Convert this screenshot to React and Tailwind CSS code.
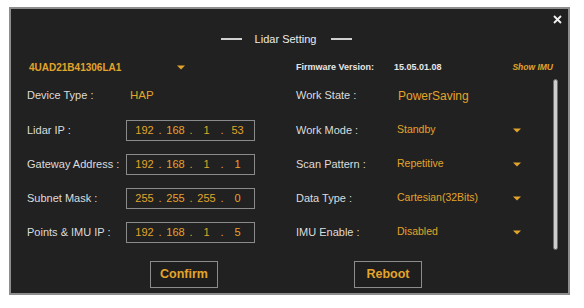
import React from 'react';

const ORANGE = 'text-[#e3a42a]';

// Small downward caret used by the dropdowns
function Caret() {
  return (
    <svg width="8" height="5" viewBox="0 0 8 5" className="shrink-0">
      <path d="M0 0.5 L8 0.5 L4 4.5 Z" fill="#e3a42a" />
    </svg>
  );
}

function IpBox({ parts }) {
  return (
    <div className="flex h-[21px] w-[129px] items-center border border-[#8a8a8a] pl-[4px]">
      {parts.map((p, i) => (
        <React.Fragment key={i}>
          <span className={`w-[27px] text-center text-[11px] ${ORANGE}`}>{p}</span>
          {i < 3 && <span className={`w-[4px] text-center text-[11px] ${ORANGE}`}>.</span>}
        </React.Fragment>
      ))}
    </div>
  );
}

const IP_ROWS = [
  ['Lidar IP :', ['192', '168', '1', '53']],
  ['Gateway Address :', ['192', '168', '1', '1']],
  ['Subnet Mask :', ['255', '255', '255', '0']],
  ['Points & IMU IP :', ['192', '168', '1', '5']],
];

const SELECTS = [
  ['Work Mode :', 'Standby'],
  ['Scan Pattern :', 'Repetitive'],
  ['Data Type :', 'Cartesian(32Bits)'],
  ['IMU Enable :', 'Disabled'],
];

export default function App() {
  return (
    <div
      className="h-[308px] w-[584px] bg-white pl-[9px] pt-[7px]"
      style={{ fontFamily: '"Liberation Sans", Arial, sans-serif' }}
    >
      <div className="relative flex h-[288px] w-[561px] flex-col border-2 border-[#8d8d8d] bg-[#212121]">
        {/* close */}
        <svg width="9" height="9" viewBox="0 0 9 9" className="absolute right-[6px] top-[6px]">
          <path d="M1 1 L8 8 M8 1 L1 8" stroke="#f2f2f2" strokeWidth="1.8" />
        </svg>

        {/* title */}
        <div className="mt-[22px] flex h-[16px] items-center justify-center pr-[6px]">
          <div className="h-[1.5px] w-[21px] bg-[#d0d0d0]" />
          <span className="ml-[13px] mr-[15px] text-[11px] text-[#ececec]">Lidar Setting</span>
          <div className="h-[1.5px] w-[21px] bg-[#d0d0d0]" />
        </div>

        <div className="mt-[10px] flex">
          {/* left column */}
          <div className="w-[286px] pl-[16px]">
            <div className="flex h-[21px] items-center">
              <div className={`w-[150px] pl-[2px] text-[10px] font-bold ${ORANGE}`}>4UAD21B41306LA1</div>
              <Caret />
            </div>
            <div className="flex h-[35px] items-center">
              <span className="w-[103px] text-[11px] text-[#dcdcdc]">Device Type :</span>
              <span className={`text-[11.5px] ${ORANGE}`}>HAP</span>
            </div>
            {IP_ROWS.map(([label, parts]) => (
              <div key={label} className="flex h-[34px] items-center">
                <span className="w-[99px] text-[11px] text-[#dcdcdc]">{label}</span>
                <IpBox parts={parts} />
              </div>
            ))}
          </div>

          {/* right column */}
          <div className="flex-1 pr-[10px]">
            <div className="flex h-[21px] items-center pr-[5px]">
              <span className="w-[98px] text-[9px] font-bold text-[#e6e6e6]">Firmware Version:</span>
              <span className="text-[9px] font-bold text-[#e6e6e6]">15.05.01.08</span>
              <span className={`ml-auto text-[8.5px] font-bold italic ${ORANGE}`}>Show IMU</span>
            </div>
            <div className="flex">
              <div className="w-[257px]">
                <div className="flex h-[35px] items-center">
                  <span className="w-[102px] text-[11px] text-[#dcdcdc]">Work State :</span>
                  <span className={`text-[12px] ${ORANGE}`}>PowerSaving</span>
                </div>
                {SELECTS.map(([label, value]) => (
                  <div key={label} className="flex h-[34px] items-center">
                    <span className="w-[101px] text-[11px] text-[#dcdcdc]">{label}</span>
                    <span className={`w-[116px] text-[10.5px] ${ORANGE}`}>{value}</span>
                    <Caret />
                  </div>
                ))}
              </div>
              <div className="mt-[1px] h-[171px] w-[5px] rounded-sm border border-[#6e6e6e] bg-[#cdcdcd]" />
            </div>
          </div>
        </div>

        {/* buttons */}
        <div className="mt-[11px] flex gap-[136px] pl-[139px]">
          <button className={`h-[27px] w-[68px] border-[1.5px] border-[#8c8c8c] bg-[#1e1e1e] text-[12.5px] font-bold ${ORANGE}`}>
            Confirm
          </button>
          <button className={`h-[27px] w-[68px] border-[1.5px] border-[#8c8c8c] bg-[#1e1e1e] text-[12.5px] font-bold ${ORANGE}`}>
            Reboot
          </button>
        </div>
      </div>
    </div>
  );
}
